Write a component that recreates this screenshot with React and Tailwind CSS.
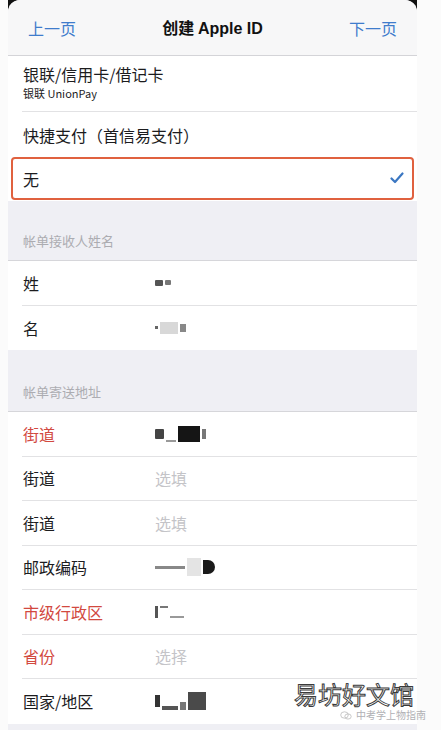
import React from 'react';

const cjk = { fontFamily: '"Noto Sans CJK SC", "Noto Sans", sans-serif' };

const Blot = ({ parts }) => (
  <div className="flex items-center gap-[2px]">
    {parts.map((p, i) => (
      <span key={i} className={p} />
    ))}
  </div>
);

const Row = ({ label, red, value, placeholder, last }) => (
  <div className="flex h-[44.5px] items-stretch pl-[14px]">
    <div className={`flex flex-1 items-center ${last ? '' : 'border-b border-[#e2e2e4]'}`}>
      <div className={`w-[133px] pl-[1px] text-[16px] ${red ? 'text-[#d2493f]' : 'text-[#1c1c1e]'}`}>{label}</div>
      {placeholder ? <div className="text-[16px] text-[#c4c4c8]">{placeholder}</div> : value}
    </div>
  </div>
);

const SectionHeader = ({ title }) => (
  <div className="flex h-[60px] items-end border-b border-[#d6d6da] bg-[#efeff4] pb-[10px] pl-[15px]">
    <span className="text-[13px] text-[#acacb1]">{title}</span>
  </div>
);

export default function App() {
  return (
    <div className="relative h-[730px] w-[441px] overflow-hidden bg-[#fbfbfb]" style={cjk}>
      <div className="ml-[8px] w-[409px] bg-[#111]">
        <div className="overflow-hidden rounded-t-[12px] bg-[#efeff4]">
          {/* nav */}
          <div className="flex h-[56px] items-center justify-between border-b border-[#d4d4d8] bg-[#f7f7f8] px-[20px]">
            <span className="text-[16px] text-[#3f7ccc]">上一页</span>
            <span className="text-[16px] font-bold text-[#111]">
              创建 <span style={{ fontFamily: '"Liberation Sans", "Noto Sans CJK SC", sans-serif' }}>Apple ID</span>
            </span>
            <span className="text-[16px] text-[#3f7ccc]">下一页</span>
          </div>

          {/* payment options */}
          <div className="bg-white">
            <div className="pl-[14px]">
              <div className="flex h-[56px] flex-col justify-center border-b border-[#e2e2e4] pl-[1px] pb-[4px]">
                <span className="text-[16px] leading-[22px] text-[#1c1c1e]">银联/信用卡/借记卡</span>
                <span className="text-[11px] leading-[16px] text-[#1c1c1e]">银联 UnionPay</span>
              </div>
              <div className="flex h-[45px] items-center pl-[1px] text-[16px] text-[#1c1c1e]">快捷支付（首信易支付）</div>
            </div>
          </div>
          <div className="bg-white px-[3px] pb-[1px]">
            <div className="flex h-[43px] items-center justify-between rounded-[4px] border-2 border-[#e0613f] pl-[10px] pr-[8px]">
              <span className="text-[16px] text-[#1c1c1e]">无</span>
              <svg width="14" height="12" viewBox="0 0 14 12" className="mb-[2px]">
                <path d="M1.5 6.5 L5 10 L12.5 1.5" fill="none" stroke="#3b77c2" strokeWidth="2.2" strokeLinecap="round" strokeLinejoin="round" />
              </svg>
            </div>
          </div>

          <SectionHeader title="帐单接收人姓名" />
          <div className="bg-white">
            <Row label="姓" value={<Blot parts={['h-[6px] w-[8px] bg-[#555] rounded-[1px]', 'h-[5px] w-[6px] bg-[#777] rounded-[1px]']} />} />
            <Row
              label="名"
              last
              value={<Blot parts={['h-[3px] w-[3px] bg-[#666]', 'h-[12px] w-[18px] bg-[#d8d8d8]', 'h-[8px] w-[6px] bg-[#888]']} />}
            />
          </div>

          <div className="h-[2px] bg-[#efeff4]" />
          <SectionHeader title="帐单寄送地址" />
          <div className="bg-white">
            <Row
              label="街道"
              red
              value={<Blot parts={['h-[10px] w-[9px] bg-[#444] rounded-[1px]', 'h-[2px] w-[10px] bg-[#999] self-end', 'h-[16px] w-[22px] bg-[#151515]', 'h-[10px] w-[4px] bg-[#777]']} />}
            />
            <Row label="街道" placeholder="选填" />
            <Row label="街道" placeholder="选填" />
            <Row
              label="邮政编码"
              value={<Blot parts={['h-[3px] w-[30px] bg-[#888]', 'h-[18px] w-[14px] bg-[#e4e4e4]', 'h-[14px] w-[12px] rounded-r-full bg-[#1a1a1a]']} />}
            />
            <Row
              label="市级行政区"
              red
              value={<Blot parts={['h-[12px] w-[3px] bg-[#555]', 'h-[2px] w-[8px] bg-[#777] self-start', 'h-[2px] w-[14px] bg-[#999] self-end']} />}
            />
            <Row label="省份" red placeholder="选择" />
            <Row
              label="国家/地区"
              last
              value={<Blot parts={['h-[12px] w-[5px] bg-[#333]', 'h-[4px] w-[16px] bg-[#555] self-end', 'h-[8px] w-[6px] bg-[#777] self-end', 'h-[18px] w-[18px] bg-[#4a4a4a]']} />}
            />
          </div>
          <div className="h-[10px] bg-[#efeff4]" />
        </div>
      </div>

      {/* watermark */}
      <div className="absolute left-[294px] top-[679px] whitespace-nowrap text-[24px] leading-[30px] text-white [-webkit-text-stroke:1px_#3a3a3a]">
        易坊好文馆
      </div>
      <svg className="absolute left-[340px] top-[711px]" width="12" height="9" viewBox="0 0 12 9">
        <ellipse cx="4.5" cy="4" rx="3.8" ry="3.2" fill="none" stroke="#bbb" strokeWidth="0.8" />
        <ellipse cx="8" cy="5.5" rx="3.2" ry="2.6" fill="none" stroke="#bbb" strokeWidth="0.8" />
      </svg>
      <div className="absolute left-[356px] top-[708px] whitespace-nowrap text-[10px] leading-[14px] text-[#b0b0b4]">
        中考学上物指南
      </div>
    </div>
  );
}
